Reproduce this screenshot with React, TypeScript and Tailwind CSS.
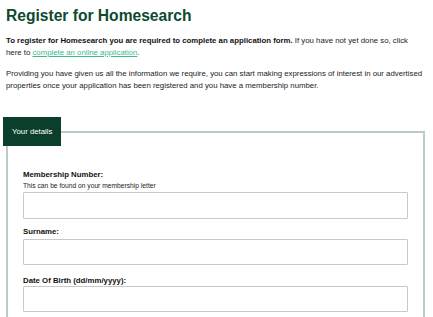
export default function App() {
    return (
        <div className="min-h-screen bg-white px-[6px] pt-[7px] font-['Liberation_Sans',Arial,sans-serif] text-[#222]">
            <h1 className="text-[15.6px] font-bold leading-[18px] text-[#0c4a31]">Register for Homesearch</h1>

            <p className="mt-[10px] text-[7.8px] leading-[11.5px]">
                <strong className="font-bold text-[#111]">
                    To register for Homesearch you are required to complete an application form.
                </strong>{' '}
                If you have not yet done so, click
                <br />
                here to{' '}
                <a href="#" className="text-[#3dbb8a] underline">
                    complete an online application
                </a>
                .
            </p>

            <p className="mt-[10px] text-[7.8px] leading-[11.5px]">
                Providing you have given us all the information we require, you can start making expressions of
                interest in our advertised properties once your application has been registered and you have a
                membership number.
            </p>

            {/* Your details */}
            <fieldset className="mt-[26px] mr-[2px] border-2 border-[#b9cdc4] px-0 pb-[10px]">
                <legend className="-ml-[5px] bg-[#0b3f2b] px-[9px] py-[9px] text-[7.8px] leading-[11px] text-white">
                    Your details
                </legend>

                <div className="px-[15px] pt-[23px]">
                    <label className="block text-[7.8px] font-bold leading-[11px] text-[#111]">
                        Membership Number:
                    </label>
                    <p className="mt-[1px] text-[6.7px] leading-[9px]">This can be found on your membership letter</p>
                    <input type="text" className="mt-[2px] block h-[27px] w-full rounded-[1px] border border-[#c9c9c9]" />

                    <label className="mt-[7px] block text-[7.8px] font-bold leading-[11px] text-[#111]">Surname:</label>
                    <input type="text" className="mt-[2px] block h-[26px] w-full rounded-[1px] border border-[#c9c9c9]" />

                    <label className="mt-[10px] block text-[7.8px] font-bold leading-[11px] text-[#111]">
                        Date Of Birth (dd/mm/yyyy):
                    </label>
                    <input type="text" className="mt-[0px] block h-[26px] w-full rounded-[1px] border border-[#c9c9c9]" />
                </div>
            </fieldset>
        </div>
    );
}
